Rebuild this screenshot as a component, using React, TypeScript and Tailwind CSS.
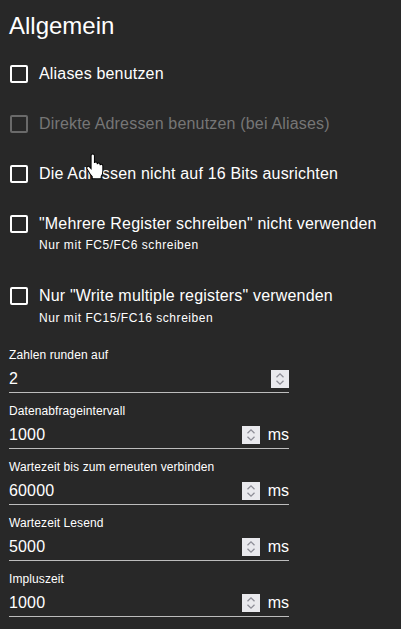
import React from "react";

const font = { fontFamily: '"Liberation Sans", Arial, sans-serif' };

function Box({ disabled }: { disabled?: boolean }) {
  return (
    <div
      className={
        "ml-[1px] h-[18px] w-[18px] shrink-0 rounded-[2px] border-2 " +
        (disabled ? "border-[#6a6a6a]" : "border-white")
      }
    />
  );
}

function Spinner() {
  return (
    <div className="h-[18px] w-[18px] shrink-0 bg-[#e9e9ed]">
      <svg width="18" height="18" viewBox="0 0 18 18" fill="none">
        <path d="M5.5 7.2 L9 3.8 L12.5 7.2" stroke="#8d8d96" strokeWidth="1.3" />
        <path d="M5.5 10.8 L9 14.2 L12.5 10.8" stroke="#8d8d96" strokeWidth="1.3" />
      </svg>
    </div>
  );
}

function Field({ label, value, unit }: { label: string; value: string; unit?: boolean }) {
  return (
    <div className="mb-[10px] w-[280px]">
      <div className="h-[16px] text-[12px] leading-[16px] tracking-[0.1px] text-white">{label}</div>
      <div className="mt-[2px] flex h-[28px] items-center border-b border-[#bdbdbd]">
        <div className="flex-1 text-[16px] leading-[19px] tracking-[0.15px] text-white">{value}</div>
        <Spinner />
        {unit && <div className="ml-[8px] text-[16px] leading-[19px] text-white">ms</div>}
      </div>
    </div>
  );
}

function Row({ label, disabled }: { label: string; disabled?: boolean }) {
  return (
    <div className="flex h-[50px] items-center gap-[11px]">
      <Box disabled={disabled} />
      <span
        className={
          "text-[16px] tracking-[0.18px] " + (disabled ? "text-[#767676]" : "text-white")
        }
      >
        {label}
      </span>
    </div>
  );
}

function Row2({ label, caption, pt, cm }: { label: string; caption: string; pt: string; cm: string }) {
  return (
    <div className={"flex items-start gap-[11px] " + pt}>
      <Box />
      <div className="flex flex-col">
        <div className="text-[16px] leading-[18px] tracking-[0.18px] text-white">{label}</div>
        <div className={"text-[12px] leading-[16px] tracking-[0.55px] text-white " + cm}>
          {caption}
        </div>
      </div>
    </div>
  );
}

export default function App() {
  return (
    <div className="relative h-[629px] w-full overflow-hidden bg-[#282828] pl-[9px]" style={font}>
      <div className="h-[39px] pt-[10px] text-[24px] leading-[32px] text-white">Allgemein</div>
      <div className="h-[10px]" />
      <Row label="Aliases benutzen" />
      <Row label="Direkte Adressen benutzen (bei Aliases)" disabled />
      <Row label="Die Adressen nicht auf 16 Bits ausrichten" />
      <Row2
        label={'"Mehrere Register schreiben" nicht verwenden'}
        caption="Nur mit FC5/FC6 schreiben"
        pt="pt-[16px]"
        cm="mt-[4px]"
      />
      <Row2
        label={'Nur "Write multiple registers" verwenden'}
        caption="Nur mit FC15/FC16 schreiben"
        pt="pt-[34px]"
        cm="mt-[5px]"
      />
      <div className="h-[21px]" />
      <Field label="Zahlen runden auf" value="2" />
      <Field label="Datenabfrageintervall" value="1000" unit />
      <Field label="Wartezeit bis zum erneuten verbinden" value="60000" unit />
      <Field label="Wartezeit Lesend" value="5000" unit />
      <Field label="Impluszeit" value="1000" unit />

      <svg
        className="pointer-events-none absolute left-[85px] top-[153px]"
        width="20"
        height="28"
        viewBox="-1 -1 17 25"
      >
        <path
          d="M4,1.5 Q4,0 5.5,0 Q7,0 7,1.5 V8 Q7,7 8.3,7 Q9.5,7 9.5,8.3 V9 Q9.6,8 10.8,8 Q12,8 12,9.3 V10 Q12.1,9 13.2,9 Q14.5,9 14.5,10.5 V15 Q14.5,18 13,20 V22 H5 V20 Q3,18 1.5,15 L0.3,13 Q-0.2,11.5 1,11 Q2,10.6 3,11.8 L4,13 Z"
          fill="#fff"
          stroke="#000"
          strokeWidth="0.9"
        />
      </svg>
    </div>
  );
}
